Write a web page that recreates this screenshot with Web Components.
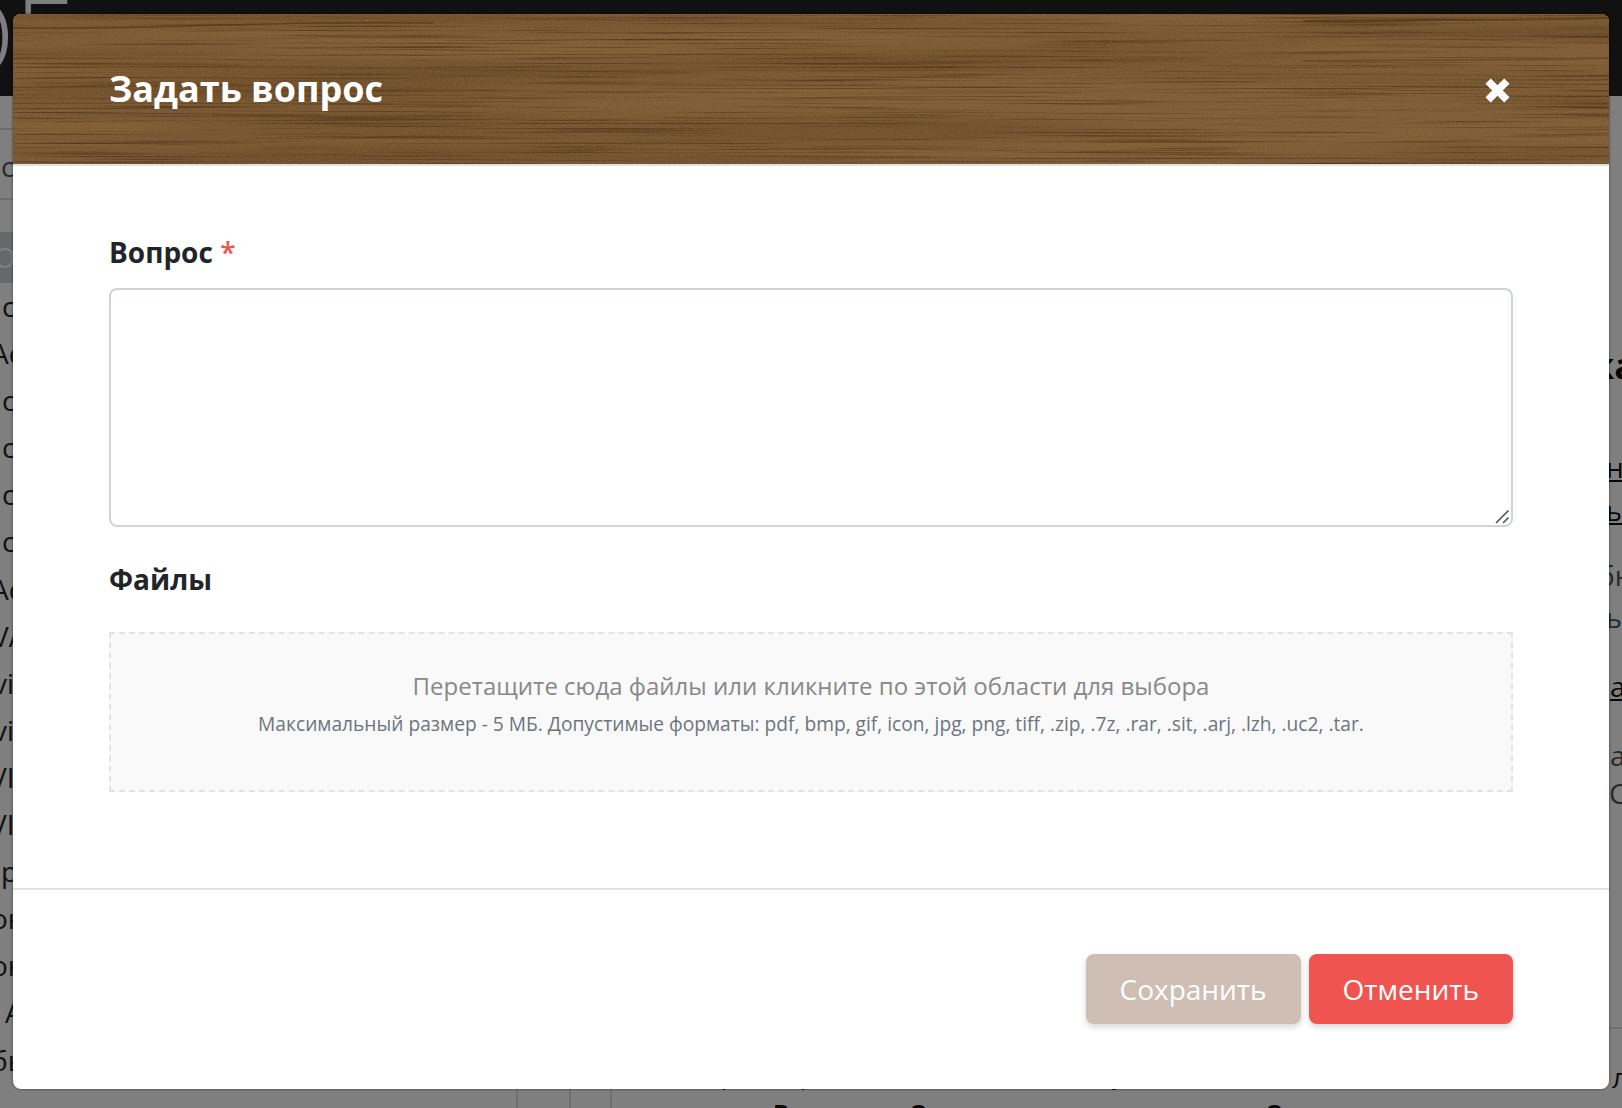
<!DOCTYPE html>
<html lang="ru">
<head>
<meta charset="utf-8">
<title>Задать вопрос</title>
<style>
  html, body { margin: 0; padding: 0; height: 100%; overflow: hidden; background: #fff; }
  body { font-family: "Open Sans", "Noto Sans", sans-serif; }
</style>
</head>
<body>
<ask-page>
  <ask-modal title="Задать вопрос">
    <ask-field label="Вопрос" required>
      <ask-textarea></ask-textarea>
    </ask-field>
    <ask-field label="Файлы" class="files">
      <ask-dropzone hint="Перетащите сюда файлы или кликните по этой области для выбора"
        note="Максимальный размер - 5 МБ. Допустимые форматы: pdf, bmp, gif, icon, jpg, png, tiff, .zip, .7z, .rar, .sit, .arj, .lzh, .uc2, .tar."></ask-dropzone>
    </ask-field>
    <ask-button slot="footer" kind="save">Сохранить</ask-button>
    <ask-button slot="footer" kind="cancel">Отменить</ask-button>
  </ask-modal>
</ask-page>

<script>
// page behind the dialog, only the edges of it are visible
class AskPage extends HTMLElement {
  constructor() {
    super();
    this.attachShadow({ mode: 'open' });
    const left = [['с', 2], ['Ас', -9], ['с', 2], ['с', 2], ['с', 2], ['с', 2], ['Ас', -9], ['VA', -8], ['vis', -7], ['vis', -7],
      ['VI', -10], ['VI', -10], ['р', 1], ['он', -9], ['он', -9], ['А', 5], ['бы', -9]];
    const right = [['ка', 'b', 350, 1592], ['н', 'u', 451, 1606], ['ы', 'u', 494, 1606], ['бн', 'm', 559, 1598], ['ы', 'm', 601, 1606],
      ['а', 'u', 670, 1610], ['а', 'm', 739, 1610], ['С', 'm', 777, 1609], ['л', 'n', 1061, 1612]];
    this.shadowRoot.innerHTML = `
      <style>
        :host { display: block; position: relative; width: 1622px; height: 1108px; overflow: hidden;
          background: #fff; color: #212529; font-size: 28px; }
        .top { height: 96px; background: #222; overflow: hidden; position: relative; }
        .logo { position: absolute; left: -67px; top: -19px; font-size: 107px; font-weight: 300; line-height: 1; color: #fff; white-space: nowrap; }
        .side { width: 300px; }
        .crumb { height: 34px; border-bottom: 2px solid #ddd; box-sizing: border-box; }
        .search { height: 70px; border-bottom: 2px solid #ddd; box-sizing: border-box; padding-left: 1px; line-height: 72px; color: #555; }
        .active { height: 51px; margin-top: 32px; background: #ccd0d4; color: #fff; line-height: 50px; white-space: nowrap; padding-left: 0; text-indent: -6px; }
        .row { height: 47.1px; line-height: 47px; white-space: nowrap; }
        .bit { position: absolute; white-space: nowrap; line-height: 32px; }
        .bit.u { text-decoration: underline; color: #111; }
        .bit.m { color: #4f565d; }
        .bit.n { color: #111; }
        .bit.b { font-weight: 700; font-size: 36px; color: #111; }
        .col { position: absolute; top: 1089px; bottom: 0; width: 2px; background: #ddd; }
        .rule { position: absolute; left: 1600px; right: 0; top: 1027px; height: 2px; background: #ddd; }
        .tail { position: absolute; top: 1098px; font-size: 24px; font-weight: 700; line-height: 30px; color: #111; white-space: nowrap; }
        .peek { position: absolute; top: 1060px; font-size: 24px; line-height: 30px; color: #111; white-space: nowrap; }
        .scrim { position: absolute; inset: 0; background: rgba(0, 0, 0, .5); }
      </style>
      <div class="top"><div class="logo">ОЕ</div></div>
      <div class="side">
        <div class="crumb"></div>
        <div class="search">с</div>
        <div class="active">ОМ</div>
        ${left.map(r => `<div class="row" style="text-indent:${r[1]}px">${r[0]}</div>`).join('')}
      </div>
      ${right.map(r => `<div class="bit ${r[1]}" style="top:${r[2]}px;left:${r[3]}px">${r[0]}</div>`).join('')}
      <div class="rule"></div>
      <div class="col" style="left:516px"></div>
      <div class="col" style="left:569px"></div>
      <div class="col" style="left:610px"></div>
      <div class="peek" style="left:721px">р</div>
      <div class="peek" style="left:800px">р</div>
      <div class="peek" style="left:1112px">у</div>
      <div class="tail" style="left:773px">В</div>
      <div class="tail" style="left:911px">З</div>
      <div class="tail" style="left:1267px">З</div>
      <div class="scrim"></div>
      <slot></slot>
    `;
  }
}
customElements.define('ask-page', AskPage);

class AskModal extends HTMLElement {
  constructor() {
    super();
    this.attachShadow({ mode: 'open' });
    this.shadowRoot.innerHTML = `
      <style>
        :host { position: absolute; left: 13px; top: 14px; width: 1596px; height: 1075px; display: flex; flex-direction: column;
          background: #fff; border-radius: 8px; overflow: hidden; box-shadow: 0 0 2px 1px rgba(0,0,0,.25); }
        header { position: relative; height: 150px; flex: none; border-bottom: 2px solid #dee2e6;
          display: flex; align-items: center; justify-content: space-between; padding: 0 96px 0 96px; overflow: hidden; background: #7f5e36; }
        header svg.wood { position: absolute; inset: 0; width: 100%; height: 100%; }
        h2 { position: relative; margin: -1px 0 0; color: #fff; font-size: 36px; font-weight: 700; line-height: 44px; }
        .close { position: relative; width: 25px; height: 25px; margin: 3px 3px 0 0; }
        .content { flex: 1; padding: 67px 96px 0 96px; }
        footer { height: 201px; flex: none; box-sizing: border-box; border-top: 2px solid #dee2e6; display: flex; justify-content: flex-end;
          gap: 8px; padding: 64px 96px 0 0; }
      </style>
      <header>
        <svg class="wood" viewBox="0 0 1596 150" preserveAspectRatio="none" aria-hidden="true">
          <defs>
            <filter id="bands" x="0" y="0" width="100%" height="100%" color-interpolation-filters="sRGB">
              <feTurbulence type="fractalNoise" baseFrequency="0.0012 0.03" numOctaves="3" seed="7"/>
              <feColorMatrix type="matrix" values="0 0 0 0 .38  0 0 0 0 .26  0 0 0 0 .13  1.6 0 0 0 -.65"/>
            </filter>
            <filter id="grain" x="0" y="0" width="100%" height="100%" color-interpolation-filters="sRGB">
              <feTurbulence type="fractalNoise" baseFrequency="0.004 0.55" numOctaves="3" seed="23"/>
              <feColorMatrix type="matrix" values="0 0 0 0 .33  0 0 0 0 .21  0 0 0 0 .09  3.2 0 0 0 -1.7"/>
            </filter>
            <filter id="fine" x="0" y="0" width="100%" height="100%" color-interpolation-filters="sRGB">
              <feTurbulence type="fractalNoise" baseFrequency="0.5 0.8" numOctaves="2" seed="4"/>
              <feColorMatrix type="matrix" values="0 0 0 0 .62  0 0 0 0 .50  0 0 0 0 .38  1.6 0 0 0 -.65"/>
            </filter>
          </defs>
          <rect width="1596" height="150" fill="#7f5e36"/>
          <rect width="1596" height="150" filter="url(#bands)"/>
          <rect width="1596" height="150" filter="url(#grain)"/>
          <rect width="1596" height="150" filter="url(#fine)" opacity=".45"/>
          <g fill="none" stroke="#4a2f12" stroke-linecap="round">
            <path d="M0 14 C60 15 130 13 210 11 S330 8 420 9" stroke-width="1.4" opacity=".6"/>
            <path d="M1290 7 C1380 5 1500 7 1596 4" stroke-width="1.6" opacity=".65"/>
            <path d="M1290 47 C1400 46 1500 46 1596 44" stroke-width="1.5" opacity=".45"/>
            <path d="M200 100 C230 102 260 100 310 101" stroke-width="1.1" opacity=".45"/>
          </g>
        </svg>
        <h2>${this.getAttribute('title')}</h2>
        <svg class="close" viewBox="0 0 26 26" aria-label="Закрыть"><path d="M0.5 6 L6 0.5 L13 7.5 L20 0.5 L25.5 6 L18.5 13 L25.5 20 L20 25.5 L13 18.5 L6 25.5 L0.5 20 L7.5 13 Z" fill="#fff"/></svg>
      </header>
      <div class="content"><slot></slot></div>
      <footer><slot name="footer"></slot></footer>
    `;
  }
}
customElements.define('ask-modal', AskModal);

class AskField extends HTMLElement {
  constructor() {
    super();
    this.attachShadow({ mode: 'open' });
    const star = this.hasAttribute('required') ? ' <span>*</span>' : '';
    this.shadowRoot.innerHTML = `
      <style>
        :host { display: block; margin-bottom: 33px; }
        label { display: block; color: #212529; font-size: 28px; font-weight: 700; line-height: 38px; margin-bottom: 17px; }
        :host(.files) label { margin-bottom: 34px; }
        span { color: #f05452; font-weight: 600; }
      </style>
      <label>${this.getAttribute('label')}${star}</label>
      <slot></slot>
    `;
  }
}
customElements.define('ask-field', AskField);

class AskTextarea extends HTMLElement {
  constructor() {
    super();
    this.attachShadow({ mode: 'open' });
    this.shadowRoot.innerHTML = `
      <style>
        :host { display: block; height: 239px; box-sizing: border-box; position: relative;
          border: 2px solid #ced4da; border-radius: 8px; background: #fff; }
        svg { position: absolute; right: 1px; bottom: 1px; width: 15px; height: 15px; }
      </style>
      <svg viewBox="0 0 15 15" aria-hidden="true"><path d="M1 14 L13.5 1.5 M8 14 L13.5 8.5" stroke="#555" stroke-width="1.6" fill="none"/></svg>
    `;
  }
}
customElements.define('ask-textarea', AskTextarea);

class AskDropzone extends HTMLElement {
  constructor() {
    super();
    this.attachShadow({ mode: 'open' });
    this.shadowRoot.innerHTML = `
      <style>
        :host { display: flex; flex-direction: column; align-items: center; box-sizing: border-box; height: 160px;
          border: 2px dashed #e3e3e3; background: #f9f9f9; padding-top: 34px; }
        .hint { color: #888; font-size: 24px; line-height: 36px; }
        .note { color: #6c757d; font-size: 19.2px; line-height: 28px; margin-top: 6px; }
      </style>
      <div class="hint">${this.getAttribute('hint')}</div>
      <div class="note">${this.getAttribute('note')}</div>
    `;
  }
}
customElements.define('ask-dropzone', AskDropzone);

class AskButton extends HTMLElement {
  constructor() {
    super();
    this.attachShadow({ mode: 'open' });
    this.shadowRoot.innerHTML = `
      <style>
        :host { display: flex; align-items: center; justify-content: center; height: 70px; box-sizing: border-box;
          padding: 0 34px; border-radius: 8px; color: #fff; font-size: 28px;
          box-shadow: 0 3px 6px rgba(0,0,0,.16); }
        :host([kind="save"]) { background: #cfbeb3; }
        :host([kind="cancel"]) { background: #f05451; }
      </style>
      <slot></slot>
    `;
  }
}
customElements.define('ask-button', AskButton);
</script>
</body>
</html>
